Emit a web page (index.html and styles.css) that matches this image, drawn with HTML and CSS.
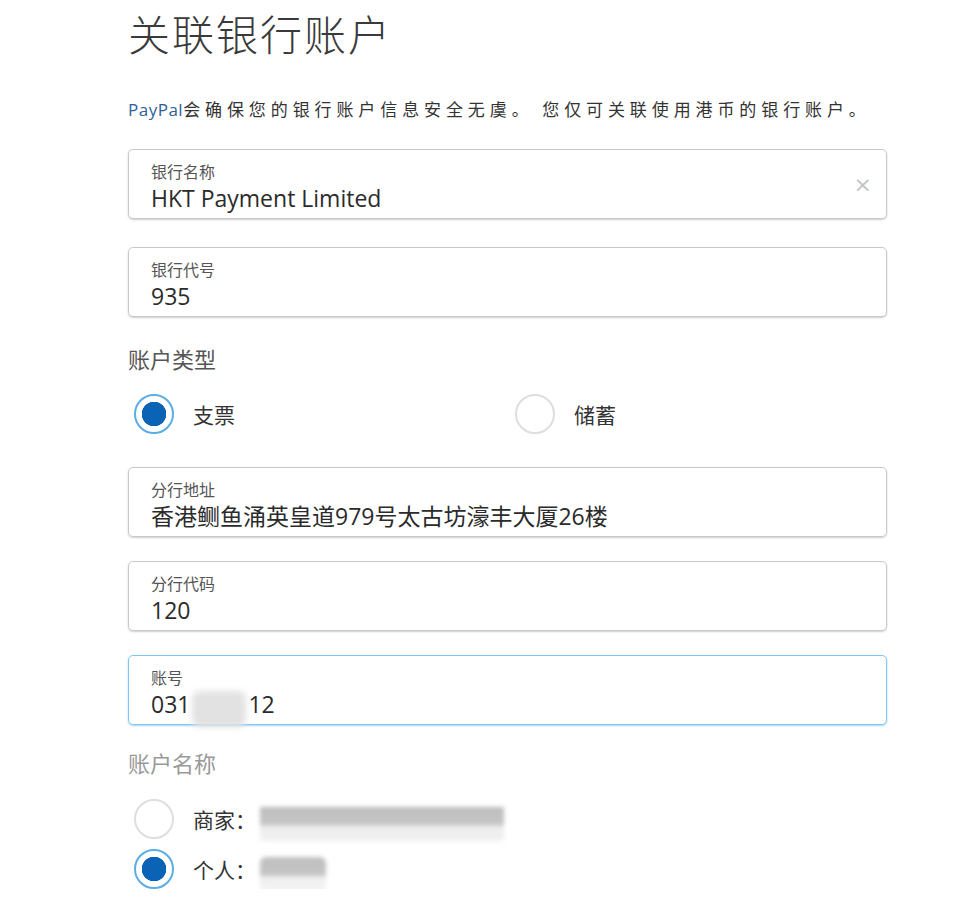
FILE: index.html
```html
<!DOCTYPE html>
<html lang="zh-CN">
<head>
  <meta charset="UTF-8">
  <title>关联银行账户</title>
  <link rel="stylesheet" href="styles.css">
</head>
<body>
  <div class="page">
    <h1>关联银行账户</h1>

    <p class="intro"><span class="brand">PayPal</span>会确保您的银行账户信息安全无虞。 您仅可关联使用港币的银行账户。</p>

    <div class="field first">
      <span class="field-label">银行名称</span>
      <span class="field-value">HKT Payment Limited</span>
      <span class="clear">&times;</span>
    </div>

    <div class="field">
      <span class="field-label">银行代号</span>
      <span class="field-value">935</span>
    </div>

    <div class="group-title">账户类型</div>
    <div class="radio-row">
      <div class="radio-item">
        <span class="radio checked"></span>
        <span class="radio-text">支票</span>
      </div>
      <div class="radio-item">
        <span class="radio"></span>
        <span class="radio-text">储蓄</span>
      </div>
    </div>

    <div class="field after-radio">
      <span class="field-label">分行地址</span>
      <span class="field-value">香港鲗鱼涌英皇道979号太古坊濠丰大厦26楼</span>
    </div>

    <div class="field tight">
      <span class="field-label">分行代码</span>
      <span class="field-value">120</span>
    </div>

    <div class="field tight focused">
      <span class="field-label">账号</span>
      <span class="field-value">031<span class="smudge"></span>12</span>
    </div>

    <div class="group-title muted">账户名称</div>
    <div class="radio-list">
      <div class="radio-item">
        <span class="radio"></span>
        <span class="radio-text">商家：</span>
        <span class="blur blur-long"></span>
      </div>
      <div class="radio-item">
        <span class="radio checked"></span>
        <span class="radio-text">个人：</span>
        <span class="blur blur-short"></span>
      </div>
    </div>
  </div>
</body>
</html>
```

FILE: styles.css
```css
body {
  margin: 0;
  background: #fff;
  font-family: "Noto Sans CJK SC", "Open Sans", sans-serif;
  color: #333;
}

.page {
  width: 759px;
  margin-left: 128px;
  padding-top: 4px;
}

h1 {
  margin: 0;
  font-size: 42px;
  font-weight: 300;
  line-height: 58px;
  color: #3a3a3a;
  letter-spacing: 2px;
}

.intro {
  margin: 34px 0 0;
  font-size: 17px;
  line-height: 26px;
  letter-spacing: 4.9px;
  color: #333;
  white-space: nowrap;
}

.intro .brand {
  font-family: "Open Sans", sans-serif;
  letter-spacing: 0.5px;
  color: #2c5f9a;
}

.field {
  position: relative;
  height: 70px;
  box-sizing: border-box;
  margin-top: 28px;
  padding: 11px 22px 0;
  border: 1px solid #c9c9c9;
  border-radius: 5px;
  box-shadow: 0 1px 2px rgba(0,0,0,0.2);
  display: flex;
  flex-direction: column;
}

.field.first {
  margin-top: 26px;
}

.field.after-radio {
  margin-top: 33px;
}

.field.tight {
  margin-top: 24px;
}

.field-label {
  font-size: 16px;
  line-height: 20px;
  color: #555;
}

.field-value {
  margin-top: 2px;
  font-family: "Open Sans", "Noto Sans CJK SC", sans-serif;
  font-size: 23px;
  line-height: 30px;
  color: #2b2b2b;
  display: flex;
  align-items: center;
}

.clear {
  position: absolute;
  right: 14px;
  top: 22px;
  font-size: 22px;
  color: #c4c4c4;
  font-family: "DejaVu Sans", sans-serif;
}

.field.focused {
  border-color: #7cc8ee;
  box-shadow: 0 1px 2px rgba(80,170,230,0.5);
}

.smudge {
  display: inline-block;
  width: 54px;
  height: 36px;
  margin: 2px 2px -8px;
  background: #e2e2e2;
  border-radius: 8px;
  filter: blur(3px);
}

.group-title {
  margin-top: 26px;
  font-size: 22px;
  line-height: 30px;
  color: #555;
}

.group-title.muted {
  margin-top: 22px;
  color: #999;
}

.radio-row {
  display: grid;
  grid-template-columns: 381px 1fr;
  margin-top: 21px;
}

.radio-list {
  margin-top: 22px;
  display: flex;
  flex-direction: column;
  gap: 10px;
}

.radio-item {
  display: flex;
  align-items: center;
  height: 40px;
}

.radio {
  width: 40px;
  height: 40px;
  box-sizing: border-box;
  border: 2px solid #dedede;
  border-radius: 50%;
  margin-left: 6px;
  flex-shrink: 0;
}

.radio.checked {
  border: 2px solid #5aaee6;
  background: radial-gradient(circle, #0b63b6 0, #0b63b6 12px, #fff 12.5px);
}

.radio-text {
  margin-left: 19px;
  font-size: 21px;
  color: #333;
}

.blur {
  display: inline-block;
  margin-left: 4px;
  filter: blur(2px);
}

.blur-long {
  width: 244px;
  height: 34px;
  background: linear-gradient(#bdbdbd 0, #c6c6c6 52%, #ececec 56%, #f1f1f1 100%);
  margin-top: 10px;
}

.blur-short {
  width: 66px;
  height: 36px;
  background: linear-gradient(#c0c0c0 0, #c4c4c4 50%, #eeeeee 55%, #f6f6f6 100%);
  border-radius: 6px;
  margin-top: 12px;
}
```
